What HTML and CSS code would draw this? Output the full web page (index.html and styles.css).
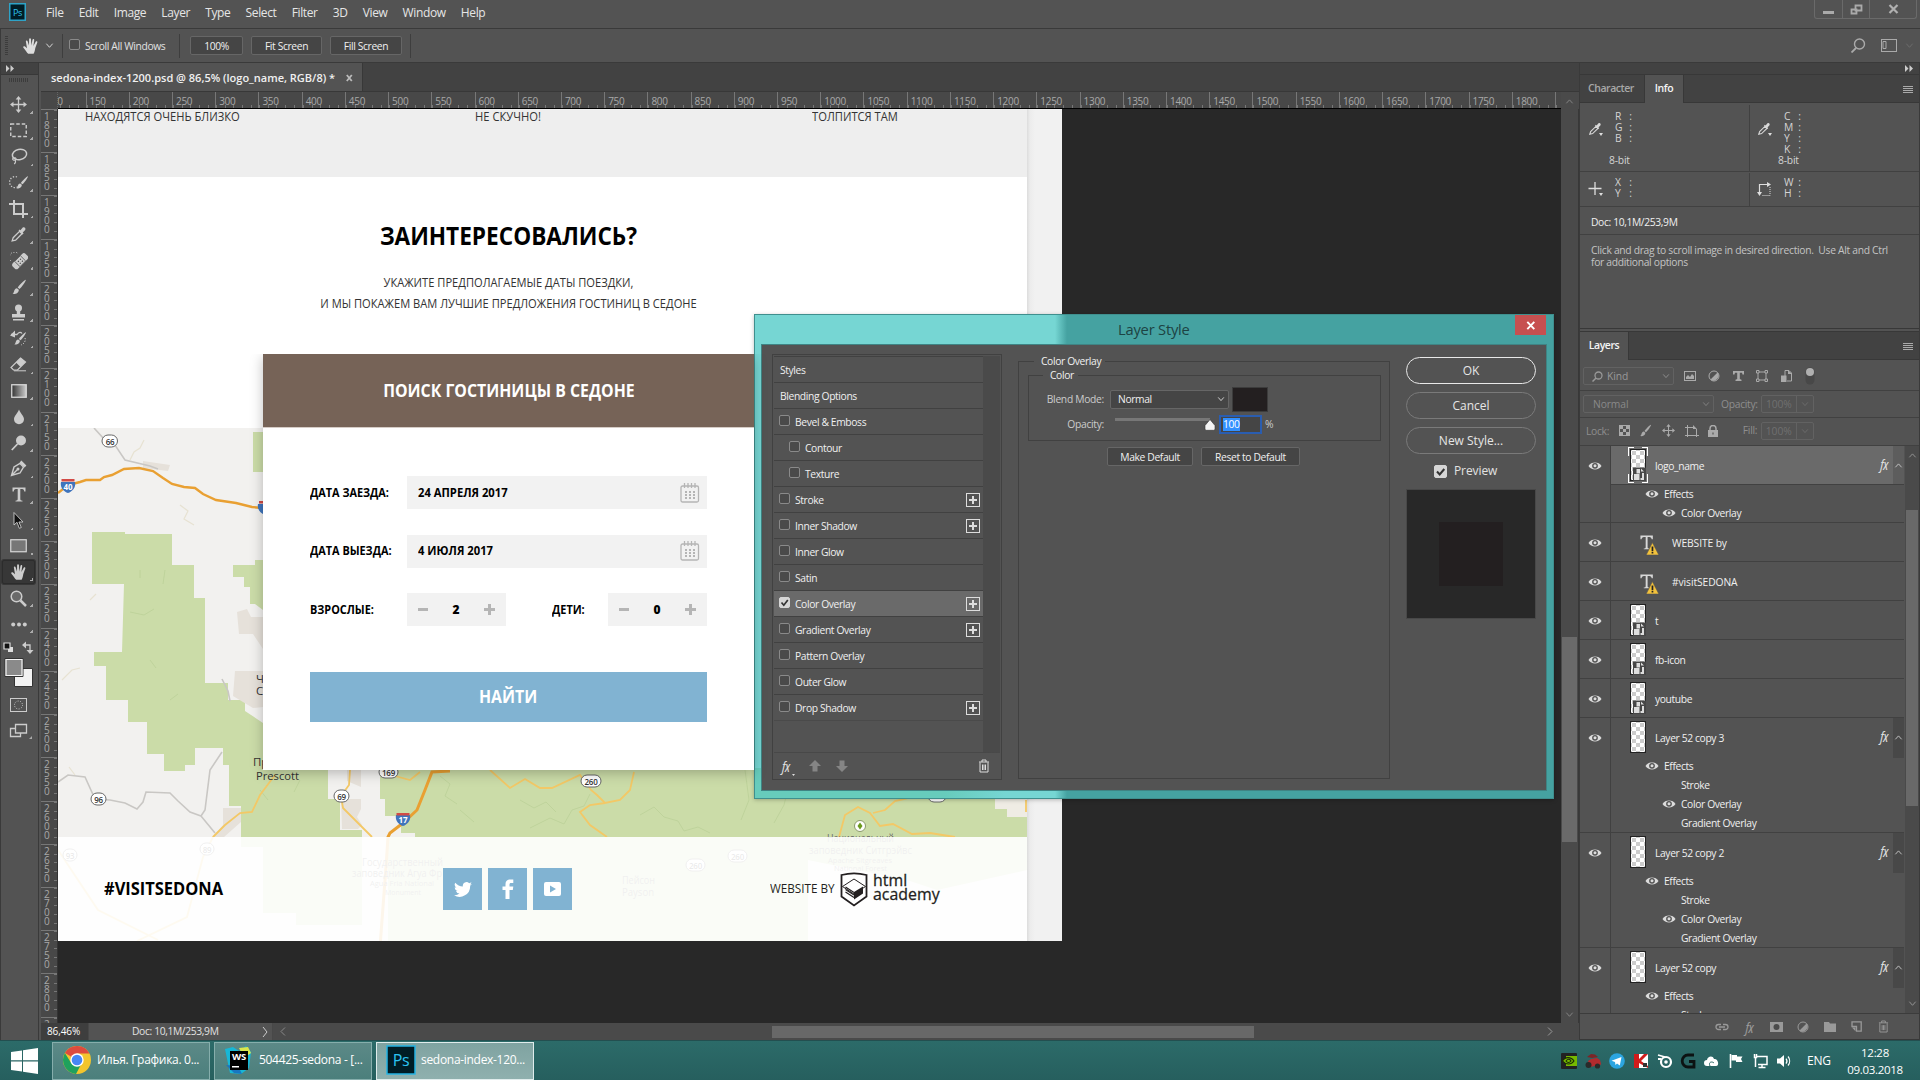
FILE: index.html
```html
<!DOCTYPE html>
<html lang="en">
<head>
<meta charset="utf-8">
<title>sedona-index-1200.psd</title>
<link rel="stylesheet" href="styles.css">
</head>
<body>
<svg class="defs" width="0" height="0">
  <defs>
    <symbol id="hand" viewBox="0 0 18 18"><path d="M6.2 16.8C5 15.600 3 12.400 1.400 10.700c-.7-.8.6-1.800 1.600-1.100l2 1.700L3.900 4.700c-.2-1.200 1.400-1.500 1.700-.4L7 8.600 7.100 2.200C7.100 1 8.900 1 9 2.200l.3 6.200 1.200-5.600c.3-1.100 1.900-.8 1.700.4l-.8 5.800 2.300-4.200c.6-1 2-.3 1.600.8l-2 5.400c-.4 2.400-.8 4.200-1.700 5.800z" fill="currentColor"/></symbol>
    <symbol id="chev" viewBox="0 0 10 10"><path d="M1.500 3l3.500 4 3.500-4" fill="none" stroke="currentColor"/></symbol>
    <symbol id="chevup" viewBox="0 0 10 10"><path d="M1.500 7L5 3.200 8.500 7" fill="none" stroke="currentColor"/></symbol>
    <symbol id="eye" viewBox="0 0 14 10"><path d="M0.500 5C3 .4 11 .4 13.500 5 11 9.600 3 9.600.5 5z" fill="#dcdcdc"/><circle cx="7" cy="4.800" r="2.900" fill="#535353"/><circle cx="7" cy="4.800" r="1.500" fill="#dcdcdc"/></symbol>
    <symbol id="dropper" viewBox="0 0 16 16"><path d="M2 14l1-3 6-6 2.300 2.300-6 6-3.300.7z" fill="none" stroke="currentColor" stroke-width="1.200"/><path d="M8 4.200l1-1 .8.8L12 1.500c1.500-1 3.200.7 2.300 2.200L12 6.200l.8.8-1 1z" fill="currentColor"/></symbol>
    <symbol id="brush" viewBox="0 0 16 16"><path d="M14.800.8c.7.500-4.600 8.400-6.300 9.200L6.700 8.600C7.700 6.700 14 .4 14.800.8zM6 9.200l1.800 1.500c.2 3.300-3.500 4.700-6.300 4.100C3.800 13.600 2.400 9.800 6 9.200z" fill="currentColor"/></symbol>
    <symbol id="move" viewBox="0 0 18 18"><path d="M9 2v14M2 9h14" stroke="currentColor" stroke-width="1.400"/><path d="M9 0l3 3.700H6zM9 18l3-3.700H6zM0 9l3.700-3v6zM18 9l-3.700-3v6z" fill="currentColor"/></symbol>
    <symbol id="trash" viewBox="0 0 12 14"><path d="M1 3h10M4 3V1h4v2M2 3.500V13h8V3.500M4.500 5.500V11M6 5.500V11M7.500 5.500V11" fill="none" stroke="currentColor"/></symbol>
    <symbol id="half" viewBox="0 0 12 12"><circle cx="6" cy="6" r="5" fill="none" stroke="currentColor"/><path d="M9.500 2.500A5 5 0 0 1 2.500 9.500z" fill="currentColor"/></symbol>
    <symbol id="typelayer" viewBox="0 0 22 22"><path d="M1.500 1h13v4h-1.200C13 3 12.300 2.500 9 2.500V13c0 1.500.5 1.500 2 1.700v.8H5v-.8c1.500-.2 2-.2 2-1.700V2.500C3.700 2.500 3 3 2.700 5H1.500z" fill="#d8d8d8"/><path d="M14 8.500L20.800 21.500H7.500z" fill="#f3c23c" stroke="#535353" stroke-width=".6"/><path d="M13.200 12.500h1.800v4.700h-1.800zM13.200 18.200h1.800v1.800h-1.800z" fill="#222"/></symbol>
    <symbol id="calendar" viewBox="0 0 20 20"><rect x="1" y="3" width="17.500" height="16" rx="1.500" fill="none" stroke="#b5b5b5" stroke-width="1.300"/><path d="M4.500 0v5M8 0v5M11.500 0v5M15 0v5" stroke="#b5b5b5" stroke-width="1.300"/><path d="M5 9h10M5 12h10M5 15h10" stroke="#b5b5b5" stroke-width="2" stroke-dasharray="2 2"/></symbol>
    <pattern id="checker" width="8" height="8" patternUnits="userSpaceOnUse"><path d="M0 0h8v8H0z" fill="#fff"/><path d="M0 0h4v4H0zM4 4h4v4H4z" fill="#ccc"/></pattern>
    <symbol id="thumb" viewBox="0 0 20 36"><rect x="2.500" y="2.500" width="15" height="31" fill="url(#checker)" stroke="#222"/></symbol>
    <symbol id="smart" viewBox="0 0 20 36"><rect x="2.500" y="2.500" width="15" height="31" fill="url(#checker)" stroke="#222"/><path d="M5 20.500h13V34H5z" fill="#474747"/><path d="M8.500 22h3.500v4.500H8.500zM13 21.500l3 3h-3z" fill="#ddd"/><path d="M15 26v6h-2.500" fill="none" stroke="#ddd" stroke-width="2"/><path d="M6 27h5.500v6H6z" fill="#ddd"/></symbol>
    <linearGradient id="grad"><stop offset="0" stop-color="#333"/><stop offset="1" stop-color="#ccc"/></linearGradient>
  </defs>
</svg>

<header class="menubar">
  <svg class="pslogo" width="17" height="18" viewBox="0 0 17 18"><rect x=".75" y=".75" width="15.500" height="16.500" fill="#001d26" stroke="#2fa3c7" stroke-width="1.500"/><text x="8.500" y="12.500" text-anchor="middle" font-size="9" fill="#31c5f0">Ps</text></svg>
  <nav class="menu"><span>File</span><span>Edit</span><span>Image</span><span>Layer</span><span>Type</span><span>Select</span><span>Filter</span><span>3D</span><span>View</span><span>Window</span><span>Help</span></nav>
  <div class="winbtns">
    <span><svg width="11" height="18"><path d="M0 11h11v3H0z" fill="#aaa"/></svg></span>
    <span><svg width="13" height="18"><path d="M5.500 5.500h6v5h-6zM1.500 9.500h5v4h-5z" fill="none" stroke="#aaa" stroke-width="1.800"/></svg></span>
    <span><svg width="11" height="18"><path d="M1.500 5l8 8M9.500 5l-8 8" stroke="#b0b0b0" stroke-width="2.200"/></svg></span>
  </div>
</header>

<section class="options">
  <i class="grip"></i>
  <svg class="opt-hand" width="18" height="18"><use href="#hand"/></svg>
  <svg class="opt-chev" width="9" height="9"><use href="#chev"/></svg>
  <i class="vsep"></i>
  <i class="cb"></i><span class="lbl">Scroll All Windows</span>
  <i class="vsep s2"></i>
  <span class="btn b1">100%</span><span class="btn b2">Fit Screen</span><span class="btn b3">Fill Screen</span>
  <i class="vsep s3"></i>
  <div class="opt-right">
    <svg width="15" height="15" viewBox="0 0 15 15"><circle cx="8.500" cy="6" r="5" fill="none" stroke="#aaa" stroke-width="1.400"/><path d="M5 10l-4.500 4.500" stroke="#aaa" stroke-width="1.800"/></svg>
    <svg width="16" height="13" viewBox="0 0 16 13"><rect x=".5" y=".5" width="15" height="12" fill="none" stroke="#aaa"/><path d="M2 2.500h3v7H2z" fill="none" stroke="#aaa"/></svg>
    <svg class="faded" width="9" height="9"><use href="#chev"/></svg>
  </div>
</section>

<main class="workspace">
  <aside class="tools">
    <div class="tools-head"><svg width="8" height="7"><path d="M0 0l3.500 3.500L0 7zM4.500 0L8 3.500 4.500 7z" fill="#ccc"/></svg></div>
    <i class="grip-h"></i>
    <ul>
      <li><svg width="17" height="17"><use href="#move"/></svg></li>
      <li><svg width="17" height="15"><rect x=".75" y="1" width="15.500" height="12.500" fill="none" stroke="#ccc" stroke-width="1.400" stroke-dasharray="3.500 2"/></svg></li>
      <li><svg width="18" height="17"><ellipse cx="9.500" cy="6.500" rx="7.200" ry="5.200" fill="none" stroke="#ccc" stroke-width="1.500" transform="rotate(-12 9.500 6.500)"/><path d="M4 9.500c-2.500 1-1 3.500 1 2.500s.5-3-1-2M5 12c1 1 .5 3-.8 4" fill="none" stroke="#ccc" stroke-width="1.200"/></svg></li>
      <li><svg width="20" height="16"><path d="M8 2a5.500 5.500 0 1 0 2 9" fill="none" stroke="#ccc" stroke-width="1.300" stroke-dasharray="1.300 1.600"/><use href="#brush" x="6" y="0" width="14" height="15"/></svg></li>
      <li><svg width="19" height="18"><path d="M0 4h14v14M5 0v14h14" fill="none" stroke="#ccc" stroke-width="2"/></svg></li>
      <li><svg width="17" height="17"><use href="#dropper"/></svg></li>
      <li><svg width="18" height="18"><g transform="rotate(-45 10 9)"><rect x="1" y="5.500" width="18" height="7.500" rx="2.500" fill="#ccc"/><rect x="6" y="5.500" width="8" height="7.500" fill="#ccc" stroke="#535353" stroke-width=".8"/><path d="M8 7.500h1.200v1.200H8zM11 7.500h1.200v1.200H11zM8 10.200h1.200v1.200H8zM11 10.200h1.200v1.200H11z" fill="#444"/></g><path d="M1 9A5 5 0 0 1 8 1.500" fill="none" stroke="#ccc" stroke-dasharray="1.200 1.500"/></svg></li>
      <li><svg width="16" height="16"><use href="#brush"/></svg></li>
      <li><svg width="15" height="17"><circle cx="7.500" cy="4" r="3.500" fill="#ccc"/><path d="M5.800 6h3.400v4H14v3.500H1V10h4.800zM2 15h11v1.500H2z" fill="#ccc"/></svg></li>
      <li><svg width="18" height="17"><use href="#brush" x="3" y="1" width="14" height="15"/><path d="M1 4.500h6C9 1.500 11 2 12 3.500" fill="none" stroke="#ccc" stroke-width="1.300"/><path d="M0 5.500l5-5v7z" fill="#ccc"/><path d="M15 8c1 3-1 6-4 7" fill="none" stroke="#ccc" stroke-dasharray="1.200 1.500"/></svg></li>
      <li><svg width="17" height="16"><path d="M10.500 1l5 4-8 8H3.500L1 10.500z" fill="none" stroke="#ccc" stroke-width="1.200"/><path d="M10.500 1l5 4-5 5-4.500-4.500z" fill="#ccc"/><path d="M4 13.800h12" stroke="#ccc"/></svg></li>
      <li><svg width="16" height="14"><rect x=".75" y=".75" width="14.500" height="12.500" fill="url(#grad)" stroke="#d8d8d8" stroke-width="1.300"/></svg></li>
      <li><svg width="12" height="16"><path d="M6 .5c1.500 4 5 6.500 5 9.800a5 5 0 0 1-10 0C1 7 4.500 4.500 6 .5z" fill="#ccc"/></svg></li>
      <li><svg width="16" height="16"><circle cx="10" cy="5.500" r="5" fill="#ccc"/><path d="M6.500 9L.8 15" stroke="#ccc" stroke-width="1.800"/></svg></li>
      <li><svg width="17" height="17"><path d="M1.500 15.500L4 7l6-3.500 3.500 3.500L10 13zM1.500 15.500L7.500 9.500" fill="none" stroke="#ccc" stroke-width="1.400"/><circle cx="8" cy="9" r="1.500" fill="#ccc"/><path d="M10.500 1.500l5 5" stroke="#ccc" stroke-width="2.500"/></svg></li>
      <li><svg width="14" height="15"><path d="M.5.500h13v4h-1.300C12 2.300 11.500 2 8.300 2v10c0 1.400.7 1.500 2.200 1.700v.8h-7v-.8c1.500-.2 2.200-.3 2.200-1.700V2C2.500 2 2 2.300 1.800 4.500H.5z" fill="#ccc"/></svg></li>
      <li><svg width="11" height="17"><path d="M1 .5v12.500l3-2.700 2.300 6 2-.8-2.400-5.500H10z" fill="#111" stroke="#ccc" stroke-width=".9"/></svg></li>
      <li><svg width="17" height="14"><rect x=".75" y=".75" width="15.500" height="12" fill="#777" stroke="#d8d8d8" stroke-width="1.200"/></svg></li>
      <li class="on"><svg width="18" height="18"><use href="#hand"/></svg></li>
      <li><svg width="17" height="17"><circle cx="6.500" cy="6.500" r="5.300" fill="#6a6a6a" stroke="#ccc" stroke-width="1.500"/><path d="M10.500 10.500l5.500 5.500" stroke="#ccc" stroke-width="2.500"/></svg></li>
      <li><svg width="16" height="5"><circle cx="2.200" cy="2.500" r="2" fill="#ccc"/><circle cx="8" cy="2.500" r="2" fill="#ccc"/><circle cx="13.800" cy="2.500" r="2" fill="#ccc"/></svg></li>
    </ul>
    <svg class="swatches" width="38" height="104" viewBox="0 637 38 104"><path d="M8 648h5v5H8z" fill="#ddd"/><path d="M4 644h6v6H4z" fill="#111" stroke="#ddd" stroke-width="1.200"/><path d="M24 646h6v6" fill="none" stroke="#ccc" stroke-width="1.300"/><path d="M26 642.500v7l-4-3.500zM26.500 651h7l-3.500 4z" fill="#ccc"/><path d="M14.500 669.500h18v18h-18z" fill="#f2f2f2" stroke="#333"/><path d="M5 659.500h18v18H5z" fill="#8a8a8a" stroke="#333"/><path d="M6 660.500h16v16H6z" fill="#8a8a8a" stroke="#f4f4f4" stroke-width="1.200"/><rect x="10.500" y="699.500" width="16" height="13" fill="none" stroke="#ccc"/><circle cx="18.500" cy="706" r="4" fill="none" stroke="#ccc" stroke-dasharray="1 1.500"/><path d="M10.500 729.500h10v8h-10z" fill="none" stroke="#ccc" stroke-width="1.300"/><path d="M15.500 725.500h11v8.500h-11z" fill="#535353" stroke="#ccc" stroke-width="1.300"/><path d="M29 740h3v-3z" fill="#aaa"/></svg>
  </aside>

  <section class="docwin">
    <div class="tabbar"><div class="tab"><b>sedona-index-1200.psd @ 86,5% (logo_name, RGB/8) *</b><svg width="7" height="8"><path d="M.8 1l5 6M5.800 1l-5 6" stroke="#bbb" stroke-width="1.800"/></svg></div></div>
    <div class="docgrid">
      <div class="corner"></div>
      <div class="hruler"><div class="ticks"><span>100</span><span>150</span><span>200</span><span>250</span><span>300</span><span>350</span><span>400</span><span>450</span><span>500</span><span>550</span><span>600</span><span>650</span><span>700</span><span>750</span><span>800</span><span>850</span><span>900</span><span>950</span><span>1000</span><span>1050</span><span>1100</span><span>1150</span><span>1200</span><span>1250</span><span>1300</span><span>1350</span><span>1400</span><span>1450</span><span>1500</span><span>1550</span><span>1600</span><span>1650</span><span>1700</span><span>1750</span><span>1800</span><span></span></div></div>
      <div class="scorner"><svg width="9" height="9"><use href="#chevup"/></svg></div>
      <div class="vruler"><span>1800</span><span>1850</span><span>1900</span><span>1950</span><span>2000</span><span>2050</span><span>2100</span><span>2150</span><span>2200</span><span>2250</span><span>2300</span><span>2350</span><span>2400</span><span>2450</span><span>2500</span><span>2550</span><span>2600</span><span>2650</span><span>2700</span><span>2750</span><span>2800</span><span>2</span></div>
      <div class="canvas">
        <div class="artboard">
          <div class="page">
            <div class="features"><span class="f1">НАХОДЯТСЯ ОЧЕНЬ БЛИЗКО</span><span class="f2">НЕ СКУЧНО!</span><span class="f3">ТОЛПИТСЯ ТАМ</span></div>
            <div class="intro">
              <h1>ЗАИНТЕРЕСОВАЛИСЬ?</h1>
              <p class="p1">УКАЖИТЕ ПРЕДПОЛАГАЕМЫЕ ДАТЫ ПОЕЗДКИ,</p>
              <p class="p2">И МЫ ПОКАЖЕМ ВАМ ЛУЧШИЕ ПРЕДЛОЖЕНИЯ ГОСТИНИЦ В СЕДОНЕ</p>
            </div>
            <svg class="map" width="969" height="513" viewBox="58 428 969 513">
              <rect x="58" y="428" width="969" height="513" fill="#f2f1ef"/>
              <g fill="#cbdca8">
                <path d="M92 532H125V534H172V565H194V598H205V683H228V700H245V711L263 723H328V799H340V830H362V925H296V913H263V847H241V806H229V765H223V748H195V765H185V771H164V754H147V722H128V700H106V666H94V652H122L124 584H92Z"/>
                <path d="M253 432h10v40h-10zM233 565h22v-5h8v50l-8-6h-5v-17h-6v-10h-11z"/>
                <path d="M380 760H1027V870L937 890 907 880 808 860V941H388V837H415V833H401V816H385V799H380Z"/>
              </g>
              <g fill="#e6e1da"><path d="M237 612l10-3 4 8h12v32l-10-15h-14zM235 671h28v36l-10 1-20-12zM223 808h18v14l-17 15h-11l10-12zM341 799h20v10l-4 8 5 8-4 4h-16zM347 770h14v17l-14-6zM143 461l27 4-2 6-25-3z"/></g>
              <g fill="none" stroke="#b9ce95" stroke-width="1" opacity=".7"><path d="M440 776l10 8-5 12 12 8M520 800l14 8 12-6 10 10M640 815l14-8 10 10 14 4 6 10 14-4 12 6M530 828l20-10 14 6 8-14 12-4 6-12M460 810l14 12M745 770l4 30-8 20M790 780l-6 25-10 18M130 612l14 3 10-6M140 570v8M165 570l-2 14M150 660l6 8M170 700l8-6M260 790l8 10M300 780l-6 12"/></g>
              <path d="M995 799h10v-6h10l12 2v22h-20v-8h-12z" fill="#efece4"/>
              <g fill="none" stroke="#c9c7c4" stroke-width="1.600"><path d="M94 428l11 12 10 5 10 15 25 6 8 3M58 782l10-7 17 2 10 22 15 1 15 3 12 6 6-7 3-10 24 1 8 8 12 11 11 4 4-6 5-40 12-18M201 816l14 17M222 679l6 12 2 10"/></g>
              <g fill="none" stroke="#e7e2d2" stroke-width="1.200"><path d="M130 460l4-8 6-4 4-8M62 680l10-10 8-2M75 775l-6-8M90 600l6-6M180 505l8 6-4 8 10 6"/></g>
              <g fill="none" stroke="#f3c866" stroke-width="1.800"><path d="M213 837l12-12 15-12 12-1 8-17 15-20M350 770l-1 15-8 11 2 12 12 12 17 17M395 776l15 4 10-8M490 770l20 18 15-9 15 9h12l28-13 11 15 6 5 8 8 15-3 10-10 4-18M605 803l-15 2-10 7 10 13 17 12M839 837l6-22 13-8 12 6 10 13 13-2 19 10 18-1 25 4M873 813l12-3 10-9 10-2 10-3M1026 800v12M58 850l40 60 60 30M213 837l-10 20-16 60-50 24"/></g>
              <g fill="none" stroke="#e9a032"><path d="M58 493l10-8 12-3 6-2h14l4-3 8-2 12-6 15-1 14 3 10 7 9 6 12 3 11 1 8 6 13 6 20 3 16 4 10 1" stroke-width="2.400"/><path d="M450 771l-18 1-7 18-8 20-14 13-13 10-2 4-2 30-6 80" stroke-width="3"/></g>
              <g class="pill"><rect x="102" y="435" width="15.500" height="12" rx="6"/><rect x="91" y="793" width="15" height="12" rx="6"/><rect x="334" y="790" width="15" height="12" rx="6"/><rect x="379" y="766" width="19" height="12" rx="6"/><rect x="581" y="775" width="20" height="12" rx="6"/><rect x="928" y="790" width="18" height="12" rx="6"/><rect x="63" y="849" width="14" height="12" rx="6"/><rect x="200" y="843" width="14" height="12" rx="6"/><rect x="728" y="850" width="19" height="12" rx="6"/><rect x="686" y="859" width="19" height="12" rx="6"/></g>
              <g class="pilltext"><text x="110" y="444.500">66</text><text x="98.500" y="802.500">96</text><text x="341.500" y="799.500">69</text><text x="388.500" y="775.500">169</text><text x="591" y="784.500">260</text><text x="70" y="858.500">93</text><text x="207" y="852.500">89</text><text x="737.500" y="859.500">260</text><text x="695.500" y="868.500">260</text></g>
              <g><path d="M61 482h14c1 5-2 9-7 11-5-2-8-6-7-11zM258 504h14c1 5-2 9-7 11-5-2-8-6-7-11zM396 815h14c1 5-2 9-7 11-5-2-8-6-7-11z" fill="#3f74bc"/><path d="M61.500 479h13v2.500h-13zM259 501h13v2.500h-13zM396.500 813h13v2.500h-13z" fill="#d24a45"/><g class="shieldtext"><text x="68" y="489.500">40</text><text x="403" y="823">17</text></g></g>
              <circle cx="860" cy="826" r="5.500" fill="#fff" stroke="#8a9a6a"/><path d="M860 822.500l2.500 3.500-2.500 3.500-2.500-3.500z" fill="#6b9a1f"/>
              <g class="places"><text x="253" y="766">Пр</text><text x="256" y="780" textLength="43" lengthAdjust="spacingAndGlyphs">Prescott</text><text x="256" y="683">Ч</text><text x="256" y="695">С</text></g>
              <g class="faint"><text x="362" y="866" textLength="81" lengthAdjust="spacingAndGlyphs">Государственный</text><text x="352" y="877" textLength="90" lengthAdjust="spacingAndGlyphs">заповедник Агуа Фр</text><g class="small"><text x="370" y="886" textLength="64" lengthAdjust="spacingAndGlyphs">Agua Fria National</text><text x="385" y="895" textLength="36" lengthAdjust="spacingAndGlyphs">Monument</text></g><text x="622" y="884" textLength="33" lengthAdjust="spacingAndGlyphs">Пейсон</text><text x="622" y="896" textLength="32" lengthAdjust="spacingAndGlyphs">Payson</text><text x="827" y="842" textLength="67" lengthAdjust="spacingAndGlyphs">Национальный</text><text x="809" y="854" textLength="103" lengthAdjust="spacingAndGlyphs">заповедник Ситгрэйвс</text><g class="small"><text x="828" y="863" textLength="64" lengthAdjust="spacingAndGlyphs">Apache Sitgreaves</text><text x="834" y="871" textLength="53" lengthAdjust="spacingAndGlyphs">National Forest</text></g></g>
            </svg>
            <div class="card">
              <div class="card-head"><span>ПОИСК ГОСТИНИЦЫ В СЕДОНЕ</span></div>
              <div class="form">
                <div class="frow"><label>ДАТА ЗАЕЗДА:</label><div class="field"><span>24 АПРЕЛЯ 2017</span><svg width="20" height="20"><use href="#calendar"/></svg></div></div>
                <div class="frow"><label>ДАТА ВЫЕЗДА:</label><div class="field"><span>4 ИЮЛЯ 2017</span><svg width="20" height="20"><use href="#calendar"/></svg></div></div>
                <div class="frow"><label>ВЗРОСЛЫЕ:</label><div class="counter"><i class="minus"></i><b>2</b><i class="plus"></i></div><label class="kids">ДЕТИ:</label><div class="counter"><i class="minus"></i><b>0</b><i class="plus"></i></div></div>
                <div class="submit"><span>НАЙТИ</span></div>
              </div>
            </div>
            <footer class="foot">
              <b class="hashtag">#VISITSEDONA</b>
              <div class="social">
                <span><svg width="18" height="15" viewBox="0 0 24 20"><path d="M24 2.400a10 10 0 0 1-2.800.8A5 5 0 0 0 23.300.4a10 10 0 0 1-3.100 1.200 5 5 0 0 0-8.400 4.500A14 14 0 0 1 1.700 1a5 5 0 0 0 1.500 6.600 5 5 0 0 1-2.200-.6 5 5 0 0 0 3.900 4.900 5 5 0 0 1-2.200.1 5 5 0 0 0 4.600 3.400A10 10 0 0 1 0 17.500 14 14 0 0 0 21.500 5 10 10 0 0 0 24 2.400z" fill="#fff"/></svg></span>
                <span><svg width="12" height="20" viewBox="0 0 12 20"><path d="M3.500 20V11H.5V7.500h3V5C3.500 2 5.200.5 8 .5h3.300V4H9C7.800 4 7.500 4.600 7.500 5.500v2h3.800L10.800 11H7.500v9z" fill="#fff"/></svg></span>
                <span><svg width="18" height="14"><rect width="17" height="14" rx="2" fill="#fff"/><path d="M6 3.500v7l6-3.500z" fill="#81b3d2"/></svg></span>
              </div>
              <div class="credit"><span class="wb">WEBSITE BY</span>
                <svg width="28" height="35" viewBox="0 0 28 35"><path d="M1.500 3C9 1 19 1 26.500 3v21.500L14 33.500 1.500 24.500z" fill="none" stroke="#231f20" stroke-width="1.800"/><path d="M14 7l11.500 7.500-11.500 7.500L2.500 14.500z" fill="none" stroke="#231f20"/><path d="M14 20l9-5.500v7L14 27.500z" fill="#231f20"/><path d="M5.500 17.500l8.500 5.500M5.500 20l8.500 5.500M5.500 15l8.500 5.500" fill="none" stroke="#231f20" stroke-width="1.200"/></svg>
                <div class="brand"><span>html</span><span>academy</span></div></div>
            </footer>
          </div>
          <div class="margin"></div>
        </div>
      </div>
      <div class="vscroll"><i></i><svg width="9" height="9"><use href="#chev"/></svg></div>
      <div class="status"><span class="zoom">86,46%</span><span class="docsize">Doc: 10,1M/253,9M</span><svg width="7" height="12"><path d="M1 1l4 5-4 5" fill="none" stroke="#ccc"/></svg><div class="hscroll"><svg width="6" height="9"><path d="M5 0.500L1 4.500l4 4" fill="none" stroke="#888"/></svg><i></i><svg width="6" height="9"><path d="M1 .5l4 4-4 4" fill="none" stroke="#999"/></svg></div></div>
    </div>
  </section>

  <aside class="panels">
    <div class="phead"><svg width="8" height="7"><path d="M0 0l3.500 3.500L0 7zM4.500 0L8 3.500 4.500 7z" fill="#ccc"/></svg></div>
    <div class="ptabs"><span class="ptab t-char">Character</span><span class="ptab t-info active">Info</span><i class="burger"></i></div>
    <div class="info">
      <div class="irow r1">
        <div class="icell"><svg class="drop" width="14" height="14"><use href="#dropper"/></svg><i class="mini"></i><div class="icol"><p>R<em>:</em></p><p>G<em>:</em></p><p>B<em>:</em></p><p>&nbsp;</p><p class="bit">8-bit</p></div></div>
        <div class="icell"><svg class="drop" width="14" height="14"><use href="#dropper"/></svg><i class="mini"></i><div class="icol"><p>C<em>:</em></p><p>M<em>:</em></p><p>Y<em>:</em></p><p>K<em>:</em></p><p class="bit">8-bit</p></div></div>
      </div>
      <div class="irow r2">
        <div class="icell"><svg class="drop" width="14" height="14"><path d="M7 0v13M.5 6.500h13" stroke="#ddd" stroke-width="1.300"/></svg><i class="mini"></i><div class="icol"><p>X<em>:</em></p><p>Y<em>:</em></p></div></div>
        <div class="icell"><svg class="drop" width="14" height="14"><path d="M2.500 11V2.500H11" fill="none" stroke="#ddd" stroke-width="1.200"/><path d="M10 0l4 2.500L10 5zM0 10h5l-2.500 4z" fill="#ddd"/><path d="M13 5v8.500H5" fill="none" stroke="#ddd" stroke-dasharray="1 1"/></svg><i class="mini none"></i><div class="icol"><p>W<em>:</em></p><p>H<em>:</em></p></div></div>
      </div>
      <div class="idoc">Doc: 10,1M/253,9M</div>
      <div class="itip">Click and drag to scroll image in desired direction.&nbsp; Use Alt and Ctrl<br>for additional options</div>
    </div>
    <div class="ptabs layers-tabs"><span class="ptab t-layers active">Layers</span><i class="burger"></i></div>
    <div class="lfilter">
      <div class="dim kind"><svg width="11" height="11"><circle cx="6.500" cy="4.500" r="3.500" fill="none" stroke="#999" stroke-width="1.300"/><path d="M4 7L.5 10.500" stroke="#999" stroke-width="1.500"/></svg><span>Kind</span><svg class="end" width="8" height="8"><use href="#chev"/></svg></div>
      <svg class="fi" width="12" height="10"><rect x=".5" y=".5" width="11" height="9" fill="none" stroke="#aaa"/><path d="M2 8V6l2-2 2 2 2-3 2 2v3z" fill="#aaa"/></svg>
      <svg class="fi" width="12" height="12"><use href="#half"/></svg>
      <svg class="fi" width="11" height="10"><path d="M0 0h11v3.500H9.500L9 1.800H6.800V8l1.700.7V10h-6V8.700L4.200 8V1.800H2l-.5 1.700H0z" fill="#aaa"/></svg>
      <svg class="fi" width="12" height="12"><path d="M2 2h8v8H2z" fill="none" stroke="#aaa"/><path d="M.5.500h2.500v2.500H.5zM9 .5h2.500v2.500H9zM.5 9h2.500v2.500H.5zM9 9h2.500v2.500H9z" fill="#535353" stroke="#aaa"/></svg>
      <svg class="fi" width="11" height="12"><path d="M4 6V.5h4L10.500 3v8H6" fill="none" stroke="#aaa"/><path d="M0 5.500h5.500V12H0zM7 0v4h4z" fill="#aaa"/></svg>
      <svg class="toggle" width="10" height="18"><rect x=".5" y=".5" width="9" height="17" rx="4.500" fill="#484848"/><circle cx="5" cy="5" r="4" fill="#b0b0b0"/></svg>
    </div>
    <div class="lblend"><div class="dim mode"><span>Normal</span><svg class="end" width="8" height="8"><use href="#chev"/></svg></div><span class="dl op">Opacity:</span><div class="dim num"><span>100%</span><i><svg width="8" height="8"><use href="#chev"/></svg></i></div></div>
    <div class="llock"><span class="dl lk">Lock:</span>
      <svg width="11" height="11"><rect x=".5" y=".5" width="10" height="10" fill="none" stroke="#aaa"/><path d="M1 1h3v3H1zM7 1h3v3H7zM4 4h3v3H4zM1 7h3v3H1zM7 7h3v3H7z" fill="#aaa"/></svg>
      <svg width="13" height="13"><use href="#brush"/></svg>
      <svg width="13" height="13"><use href="#move"/></svg>
      <svg width="14" height="12"><path d="M0 2.500h8M0 10.500h14M2.500 0v12M11.500 4v8" stroke="#aaa"/><path d="M8 0l4 4H8z" fill="#aaa"/></svg>
      <svg width="10" height="12"><path d="M0 5h10v7H0z" fill="#aaa"/><path d="M2 5V3.500a3 3 0 0 1 6 0V5" fill="none" stroke="#aaa" stroke-width="1.500"/><path d="M4.500 7.500h1v2h-1z" fill="#444"/></svg>
      <span class="dl fl">Fill:</span><div class="dim num"><span>100%</span><i><svg width="8" height="8"><use href="#chev"/></svg></i></div></div>
    <div class="lwrap">
      <div class="llist">
        <div class="layer"><div class="eyecol"><svg width="14" height="10"><use href="#eye"/></svg></div><div class="lbody"><div class="lrow sel"><svg class="thumb" width="20" height="36"><use href="#smart"/><path d="M.5 9V.5H6M14 .5h5.500V9M.5 27v8.500H6M14 35.500h5.500V27" fill="none" stroke="#fff" stroke-width="1.200"/></svg><span class="nm">logo_name</span><em class="fx">fx</em><i class="fold"><svg width="9" height="9"><use href="#chevup"/></svg></i></div><div class="ef e1"><svg width="14" height="10"><use href="#eye"/></svg>Effects</div><div class="ef e2"><svg width="14" height="10"><use href="#eye"/></svg>Color Overlay</div></div></div>
        <div class="layer"><div class="eyecol"><svg width="14" height="10"><use href="#eye"/></svg></div><div class="lbody"><div class="lrow"><svg class="tt" width="21" height="22"><use href="#typelayer"/></svg><span class="nm tn">WEBSITE by</span></div></div></div>
        <div class="layer"><div class="eyecol"><svg width="14" height="10"><use href="#eye"/></svg></div><div class="lbody"><div class="lrow"><svg class="tt" width="21" height="22"><use href="#typelayer"/></svg><span class="nm tn">#visitSEDONA</span></div></div></div>
        <div class="layer"><div class="eyecol"><svg width="14" height="10"><use href="#eye"/></svg></div><div class="lbody"><div class="lrow"><svg class="thumb" width="20" height="36"><use href="#smart"/></svg><span class="nm">t</span></div></div></div>
        <div class="layer"><div class="eyecol"><svg width="14" height="10"><use href="#eye"/></svg></div><div class="lbody"><div class="lrow"><svg class="thumb" width="20" height="36"><use href="#smart"/></svg><span class="nm">fb-icon</span></div></div></div>
        <div class="layer"><div class="eyecol"><svg width="14" height="10"><use href="#eye"/></svg></div><div class="lbody"><div class="lrow"><svg class="thumb" width="20" height="36"><use href="#smart"/></svg><span class="nm">youtube</span></div></div></div>
        <div class="layer"><div class="eyecol"><svg width="14" height="10"><use href="#eye"/></svg></div><div class="lbody"><div class="lrow"><svg class="thumb" width="20" height="36"><use href="#thumb"/></svg><span class="nm">Layer 52 copy 3</span><em class="fx">fx</em><i class="fold"><svg width="9" height="9"><use href="#chevup"/></svg></i></div><div class="ef e1"><svg width="14" height="10"><use href="#eye"/></svg>Effects</div><div class="ef e3">Stroke</div><div class="ef e2"><svg width="14" height="10"><use href="#eye"/></svg>Color Overlay</div><div class="ef e3">Gradient Overlay</div></div></div>
        <div class="layer"><div class="eyecol"><svg width="14" height="10"><use href="#eye"/></svg></div><div class="lbody"><div class="lrow"><svg class="thumb" width="20" height="36"><use href="#thumb"/></svg><span class="nm">Layer 52 copy 2</span><em class="fx">fx</em><i class="fold"><svg width="9" height="9"><use href="#chevup"/></svg></i></div><div class="ef e1"><svg width="14" height="10"><use href="#eye"/></svg>Effects</div><div class="ef e3">Stroke</div><div class="ef e2"><svg width="14" height="10"><use href="#eye"/></svg>Color Overlay</div><div class="ef e3">Gradient Overlay</div></div></div>
        <div class="layer"><div class="eyecol"><svg width="14" height="10"><use href="#eye"/></svg></div><div class="lbody"><div class="lrow"><svg class="thumb" width="20" height="36"><use href="#thumb"/></svg><span class="nm">Layer 52 copy</span><em class="fx">fx</em><i class="fold"><svg width="9" height="9"><use href="#chevup"/></svg></i></div><div class="ef e1"><svg width="14" height="10"><use href="#eye"/></svg>Effects</div><div class="ef e3">Stroke</div></div></div>
      </div>
      <div class="lscroll"><svg width="9" height="9"><use href="#chevup"/></svg><i></i><svg width="9" height="9"><use href="#chev"/></svg></div>
    </div>
    <div class="lfoot">
      <svg width="14" height="8"><path d="M6 1.500H3.500a2.500 2.500 0 0 0 0 5H6M8 1.500h2.500a2.500 2.500 0 0 1 0 5H8M4 4h6" fill="none" stroke="#999" stroke-width="1.300"/></svg>
      <em class="fx">fx</em>
      <svg width="13" height="10"><path d="M0 0h13v10H0z" fill="#999"/><circle cx="6.500" cy="5" r="3" fill="#4a4a4a"/></svg>
      <svg width="12" height="12"><use href="#half"/></svg>
      <svg width="12" height="10"><path d="M0 0h5l1 1.500h6V10H0z" fill="#999"/></svg>
      <svg width="11" height="11"><path d="M1 .8h9.200v9.400H5.500V5.500H1z" fill="none" stroke="#999" stroke-width="1.300"/><path d="M1 6.500l3.500 3.700V6.500z" fill="#999"/></svg>
      <svg width="11" height="13"><use href="#trash"/></svg>
    </div>
  </aside>
</main>

<footer class="taskbar">
  <svg class="start" width="27" height="26" viewBox="0 0 27 26"><path d="M0 4l11-1.600V12.300H0zM12 2.200L27 0v12.300H12zM0 13.500h11v10L0 22zM12 13.500h15V26l-15-2.200z" fill="#fff"/></svg>
  <div class="task"><svg width="30" height="30" viewBox="0 0 30 30"><circle cx="15" cy="15" r="14" fill="#f3c52d"/><path d="M15 15L2.900 8A14 14 0 0 1 27.500 8.500H15z" fill="#dd4b3e"/><path d="M2.900 8A14 14 0 0 0 14 29l5.500-10.500L15 15 8.500 17z" fill="#1fa15d"/><circle cx="15" cy="15" r="6.700" fill="#fff"/><circle cx="15" cy="15" r="5.300" fill="#4687f4"/></svg><span>Илья. Графика. 0...</span></div>
  <div class="task"><svg width="30" height="30" viewBox="0 0 30 30"><path d="M1 4l8-2 6 4 7-5 5 6-2 16-8 6-11-1z" fill="#17b7d6"/><path d="M15 3l9-1 3 6-7 5z" fill="#dbe64c"/><path d="M2 20l8 8 8 1-4-8z" fill="#1876c0"/><path d="M6 6h18v19H6z" fill="#000"/><path d="M8 21h7v1.500H8z" fill="#fff"/><text x="15" y="15" text-anchor="middle" font-size="9.500" font-weight="700" fill="#fff">WS</text></svg><span>504425-sedona - [...</span></div>
  <div class="task active"><svg width="30" height="30" viewBox="0 0 30 30"><rect x="1" y="1" width="28" height="28" fill="#001d26" stroke="#25b4e4" stroke-width="1.500"/><text x="15" y="21" text-anchor="middle" font-size="16" fill="#2cc4f4">Ps</text></svg><span>sedona-index-120...</span></div>
  <div class="tray">
    <svg width="16" height="16"><rect width="16" height="16" rx="1" fill="#222"/><path d="M5 3h11v10H5z" fill="#76b900"/><path d="M1.500 8C4 3.500 10 3.500 13 8c-3 4-8 4-11.500 0zM5 8c2-2.500 4-2 5 0-1.500 2-3.500 2-5 0z" fill="#76b900" stroke="#1c2b06" stroke-width="1.100"/></svg>
    <svg width="16" height="16"><path d="M3 8l3-2 6-1 3 2 1 4-2 3-4-1-5 1z" fill="#b32a2e"/><circle cx="3.500" cy="12" r="3" fill="#2a2a2a"/><circle cx="12.500" cy="13" r="2.600" fill="#2a2a2a"/><path d="M2 4l4-3 4 .5 3 2.500-6 1z" fill="#7d2426"/></svg>
    <svg width="16" height="16"><circle cx="8" cy="8" r="7.800" fill="#2ca5e0"/><path d="M2.500 7.800L12.500 4l-1.700 8.500L8 10.500l-1.500 1.500-.5-3z" fill="#fff"/></svg>
    <svg width="16" height="16"><path d="M1 1h14v14H1z" fill="#fff"/><path d="M1 1h5v5l5-5h4L8 8l7 5v2L6 10v5H1z" fill="#cf1b1b"/><path d="M10 10h4v4h-4z" fill="#333"/></svg>
    <svg width="16" height="16"><circle cx="9" cy="9" r="5" fill="none" stroke="#fff" stroke-width="2.200"/><circle cx="9" cy="9" r="1.800" fill="#fff"/><path d="M1 2l7 2M1 6h3" stroke="#fff" stroke-width="1.800"/></svg>
    <svg width="16" height="16"><path d="M14 2H8A5.500 5.700 0 0 0 8 14h6V8.500H9" fill="none" stroke="#0c1212" stroke-width="2.800"/></svg>
    <svg width="16" height="16"><path d="M3 13a3 3 0 0 1 0-6c.5-4 6-5 7-1 4-1 6 7 2 7z" fill="#fff"/><path d="M6 13c-2-4 2-5 4-3" fill="none" stroke="#2a6765"/></svg>
    <svg width="16" height="16"><path d="M2.500 1v14" stroke="#fff" stroke-width="1.600"/><path d="M3.500 2h5.500v1.500h5.500L13 6l1.500 3H8V7.500H3.500z" fill="#fff"/></svg>
    <svg width="16" height="16"><path d="M5 3.500h10v8H6M10 12v2.500M6.500 14.500h7M2.500 1v3.500h2V1M3.500 5v9" fill="none" stroke="#fff" stroke-width="1.500"/></svg>
    <svg width="16" height="16"><path d="M1 5.500h3L8 2v12L4 10.500H1z" fill="#fff"/><path d="M10 5.500a4 4 0 0 1 0 5M12 3.500a7 7 0 0 1 0 9" fill="none" stroke="#fff" stroke-width="1.200"/></svg>
  </div>
  <span class="lang">ENG</span>
  <div class="clock"><span>12:28</span><span>09.03.2018</span></div>
</footer>

<div class="dialog">
  <div class="dtitle"><span>Layer Style</span><i class="close"><svg width="10" height="9"><path d="M1.300.8l7 7.400M8.300.8l-7 7.400" stroke="#fff" stroke-width="1.900"/></svg></i></div>
  <div class="dbody">
    <div class="dlist">
      <div class="drows">
        <div class="drow"><span>Styles</span></div>
        <div class="drow"><span>Blending Options</span></div>
        <div class="drow"><i class="cb"></i><span>Bevel &amp; Emboss</span></div>
        <div class="drow sub"><i class="cb"></i><span>Contour</span></div>
        <div class="drow sub"><i class="cb"></i><span>Texture</span></div>
        <div class="drow"><i class="cb"></i><span>Stroke</span><i class="add"></i></div>
        <div class="drow"><i class="cb"></i><span>Inner Shadow</span><i class="add"></i></div>
        <div class="drow"><i class="cb"></i><span>Inner Glow</span></div>
        <div class="drow"><i class="cb"></i><span>Satin</span></div>
        <div class="drow sel"><i class="cb on"><svg width="11" height="11"><path d="M2.500 5.500l2.300 2.700L8.800 3" fill="none" stroke="#333" stroke-width="1.700"/></svg></i><span>Color Overlay</span><i class="add"></i></div>
        <div class="drow"><i class="cb"></i><span>Gradient Overlay</span><i class="add"></i></div>
        <div class="drow"><i class="cb"></i><span>Pattern Overlay</span></div>
        <div class="drow"><i class="cb"></i><span>Outer Glow</span></div>
        <div class="drow"><i class="cb"></i><span>Drop Shadow</span><i class="add"></i></div>
      </div>
      <div class="dlfoot"><em class="fx">fx</em><svg class="dn" width="3" height="3"><path d="M0 0h3L1.500 2z" fill="#ddd"/></svg><svg class="a1" width="12" height="12"><path d="M6 0l6 6H8.500v5.500h-5V6H0z" fill="#858585"/></svg><svg class="a2" width="12" height="12"><path d="M6 12l6-6H8.500V.5h-5V6H0z" fill="#858585"/></svg><svg class="tr" width="12" height="14"><use href="#trash"/></svg></div>
    </div>
    <fieldset class="outer"><legend>Color Overlay</legend>
      <fieldset class="inner"><legend>Color</legend>
        <div class="crow"><span class="cl">Blend Mode:</span><div class="select"><span>Normal</span><svg width="8" height="8"><use href="#chev"/></svg></div><i class="swatch"></i></div>
        <div class="crow c2"><span class="cl">Opacity:</span><div class="slider"><svg width="12" height="12"><path d="M6 .5l5 6V10a1.300 1.300 0 0 1-1.300 1.300H2.300A1.300 1.300 0 0 1 1 10V6.500z" fill="#f4f4f4" stroke="#333" stroke-width=".6"/></svg></div><div class="input"><mark>100</mark></div><span class="pct">%</span></div>
      </fieldset>
      <div class="defaults"><span class="btn d1">Make Default</span><span class="btn d2">Reset to Default</span></div>
    </fieldset>
    <div class="dside">
      <span class="pbtn ok">OK</span><span class="pbtn">Cancel</span><span class="pbtn">New Style...</span>
      <div class="prev"><i class="cb on big"><svg width="13" height="13"><path d="M3 6.500l2.700 3L10.300 4" fill="none" stroke="#333" stroke-width="2"/></svg></i><span>Preview</span></div>
      <div class="pbox"><i></i></div>
    </div>
  </div>
</div>
</body>
</html>
```

FILE: styles.css
```css
* { box-sizing: border-box; }
html, body { margin: 0; padding: 0; }
body { width: 1920px; height: 1080px; overflow: hidden; display: flex; flex-direction: column; background: #535353; color: #e2e2e2; font: 10.3px/12px "Open Sans", "Noto Sans", sans-serif; letter-spacing: -.37px; white-space: nowrap; }
svg { display: block; flex: none; }
i { font-style: normal; display: block; flex: none; }
ul, p, h1 { margin: 0; padding: 0; list-style: none; }
.defs { position: absolute; }
.fx { font: italic 15px/16px "Open Sans", sans-serif; font-stretch: 75%; letter-spacing: -.3px; color: #ddd; }

/* menu bar */
.menubar { height: 29px; flex: none; display: flex; align-items: flex-start; border-bottom: 1px solid #3a3a3a; }
.pslogo { margin: 3px 0 0 9px; }
.menu { display: flex; gap: 15.1px; margin-left: 20px; font-size: 12px; line-height: 26px; letter-spacing: -.36px; color: #e6e6e6; }
.winbtns { margin-left: auto; margin-right: 3px; height: 19px; display: flex; border: 1px solid #6a6a6a; border-top: 0; border-radius: 0 0 3px 3px; }
.winbtns span { width: 27px; display: flex; justify-content: center; border-left: 1px solid #6a6a6a; }
.winbtns span:first-child { border-left: 0; }
.winbtns span:last-child { width: 47px; }

/* options bar */
.options { height: 34px; flex: none; display: flex; align-items: center; border-bottom: 1px solid #3a3a3a; border-left: 1px solid #3a3a3a; padding-left: 4px; }
.grip { width: 3px; height: 20px; background: repeating-linear-gradient(#3c3c3c 0 1px, transparent 1px 2px); }
.opt-hand { margin-left: 14px; color: #ddd; }
.opt-chev { margin-left: 5px; }
.vsep { width: 1px; height: 24px; background: #3e3e3e; margin-left: 8px; }
.cb { width: 11px; height: 11px; border: 1px solid #8a8a8a; border-radius: 2px; background: #4a4a4a; }
.cb.on { border-color: #d6d6d6; background: #d6d6d6; }
.cb.on svg { margin: -1px; }
.options .cb { margin-left: 6px; margin-top: -2px; }
.options .lbl { margin-left: 5px; width: 94px; }
.options .s2 { margin-left: 0; }
.btn { height: 19px; display: flex; align-items: center; justify-content: center; border: 1px solid #666; border-radius: 2px; background: #454545; color: #f0f0f0; }
.b1 { width: 53px; margin-left: 10px; }
.b2 { width: 71px; margin-left: 8px; }
.b3 { width: 72px; margin-left: 8px; }
.opt-right { margin-left: auto; display: flex; align-items: center; gap: 14.5px; padding-right: 6px; }
.opt-right .faded { margin-left: -6px; color: #6e6e6e; }

.workspace { height: 977px; flex: none; display: flex; }

/* tools */
.tools { width: 39px; flex: none; border-left: 1px solid #3a3a3a; border-right: 1px solid #3a3a3a; display: flex; flex-direction: column; }
.tools-head { height: 12px; background: #424242; border-bottom: 1px solid #383838; padding: 2px 0 0 5px; }
.grip-h { width: 20px; height: 4px; margin: 3px 0 0 8px; background: repeating-linear-gradient(90deg, #3c3c3c 0 1px, transparent 1px 2px); }
.tools ul { margin-top: 10px; }
.tools li { height: 25.980px; width: 35px; display: flex; align-items: center; justify-content: center; color: #ccc; background: linear-gradient(135deg, transparent 50%, #aaa 50%) 29px 19px / 3px 3px no-repeat; }
.tools li.on { background-color: #373737; outline: 1px solid #2c2c2c; outline-offset: -2px; border-radius: 3px; }
.swatches { margin-left: -1px; margin-top: -1px; }

/* document window */
.docwin { width: 1538px; margin-left: 2px; flex: none; display: flex; flex-direction: column; }
.tabbar { height: 29px; flex: none; background: #424242; border-bottom: 1px solid #383838; display: flex; }
.tab { width: 322px; background: #535353; display: flex; align-items: center; padding: 1px 0 0 10px; gap: 10px; border-right: 1px solid #383838; height: 28px; }
.tab b { font-size: 11px; font-weight: 600; letter-spacing: 0; color: #f0f0f0; width: 285px; }
.docgrid { flex: 1; display: grid; grid-template: 17px 914px 17px / 17px 1503px 18px; }
.corner { background: #484848; border-right: 1px dotted #666; }
.hruler { overflow: hidden; background: #484848; border-bottom: 1px solid #000; }
.ticks { display: flex; margin-left: -15.700px; }
.ticks span { width: 43.230px; flex: none; height: 16px; border-left: 1px solid #777; padding-left: 3px; color: #a9a9a9; line-height: 19px; font-size: 10px; letter-spacing: -.3px; background: repeating-linear-gradient(90deg, #777 0 1px, transparent 1px 8.646px) 0 13px / 100% 3px no-repeat; }
.scorner { background: #4a4a4a; color: #888; padding: 5px 0 0 4px; }
.vruler { overflow: hidden; background: #484848; display: flex; flex-direction: column; border-right: 1px solid #333; }
.vruler span { height: 43.230px; flex: none; border-top: 1px solid #777; padding: 2px 8px 0 3px; width: 17px; color: #a9a9a9; font-size: 10px; letter-spacing: 0; line-height: 9px; word-break: break-all; white-space: normal; background: repeating-linear-gradient(#777 0 1px, transparent 1px 8.646px) 13px 0 / 3px 100% no-repeat; }
.canvas { background: #282828; overflow: hidden; }

/* site mock-up on the artboard */
.artboard { display: flex; width: 1004px; height: 832px; }
.page { width: 969px; display: grid; grid-template: 68px 177px 74px 342px 67px 104px / 205px 491px 273px; background: #fff; color: #000; letter-spacing: 0; }
.margin { width: 35px; background: linear-gradient(90deg, #dcdcdc, #ececec 3px, #f1f1f1 8px); }
.features { grid-area: 1 / 1 / 2 / 4; background: #eee; color: #333; font-size: 12px; line-height: 15px; display: flex; }
.features span { flex: none; transform: scaleX(.933); transform-origin: 0 0; }
.f1 { margin-left: 27px; width: 390px; }
.f2 { width: 337px; }
.intro { grid-area: 2 / 1 / 3 / 4; width: 901px; text-align: center; }
.intro h1 { font-size: 25px; line-height: 30px; margin-top: 43px; transform: scaleX(.905); }
.intro p { font-size: 12px; line-height: 21px; color: #333; transform: scaleX(.928); }
.intro .p1 { margin-top: 22px; }
.map { grid-area: 4 / 1 / 7 / 4; }
.card { grid-area: 3 / 2 / 5 / 3; z-index: 1; background: #fff; box-shadow: 0 3px 12px rgba(0,0,0,.25); clip-path: inset(0 -20px -20px -20px); }
.card-head { height: 74px; background: #766357; color: #fff; font-size: 18px; font-weight: 700; display: flex; align-items: center; justify-content: center; padding-bottom: 1px; border-bottom: 1px solid #d6ccc6; }
.card-head span { transform: scaleX(.88); }
.form { padding: 48px 47px 0 47px; }
.frow { display: flex; align-items: center; height: 33px; margin-bottom: 25.500px; font-size: 12px; font-weight: 700; }
.frow label { width: 97px; flex: none; transform: scaleX(.905); transform-origin: 0 0; }
.field { width: 300px; height: 33px; background: #f2f2f2; display: flex; align-items: center; justify-content: space-between; padding: 0 7px 0 11px; }
.field span { transform: scaleX(.935); transform-origin: 0 0; }
.counter { width: 99px; height: 33px; background: #f2f2f2; display: flex; align-items: center; justify-content: space-between; padding: 0 11px; }
.frow .kids { margin-left: 46px; width: 56px; }
.minus { width: 10px; height: 3px; background: #b5b5b5; }
.plus { width: 11px; height: 11px; background: linear-gradient(#b5b5b5, #b5b5b5) center / 3px 100% no-repeat, linear-gradient(#b5b5b5, #b5b5b5) center / 100% 3px no-repeat; }
.submit { margin-top: 46px; height: 50px; background: #81b3d2; color: #fff; font-size: 18px; font-weight: 700; display: flex; align-items: center; justify-content: center; padding-bottom: 2px; }
.submit span { transform: scaleX(.88); }
.foot { grid-area: 6 / 1 / 7 / 4; z-index: 1; background: rgba(255,255,255,.9); display: flex; align-items: center; }
.hashtag { font-size: 17.500px; margin-left: 46px; width: 339px; padding-bottom: 3px; transform: scaleX(.94); transform-origin: 0 0; }
.social { display: flex; gap: 6px; }
.social span { width: 39px; height: 42px; background: #81b3d2; display: flex; align-items: center; justify-content: center; }
.credit { display: flex; align-items: center; margin-left: 198px; color: #231f20; }
.wb { font-size: 13px; width: 70px; padding-bottom: 2px; transform: scaleX(.9); transform-origin: 0 0; }
.brand { display: flex; flex-direction: column; margin-left: 5px; font-size: 17px; line-height: 14px; padding-bottom: 4px; transform: scaleX(.935); transform-origin: 0 0; -webkit-text-stroke: .3px #231f20; }
.pill rect { fill: #fff; stroke: #666; stroke-width: 1; }
.pilltext text { font-size: 8px; font-weight: 600; text-anchor: middle; fill: #333; letter-spacing: -.3px; }
.shieldtext text { font-size: 8px; font-weight: 700; text-anchor: middle; fill: #fff; }
.places text { font-size: 11.500px; fill: #333; }
.faint text { font-size: 10px; fill: #666; }
.faint .small text { font-size: 8px; }

.vscroll { background: #4a4a4a; border-right: 1px solid #383838; display: flex; flex-direction: column; justify-content: space-between; padding: 528px 0 4px 1px; color: #888; }
.vscroll i { width: 15px; height: 205px; background: #6a6a6a; }
.vscroll svg { margin-left: 3px; }
.status { grid-column: 1 / 4; background: #484848; display: flex; align-items: center; }
.zoom { width: 47px; padding-left: 6px; background: #3e3e3e; height: 17px; line-height: 16px; color: #fff; font-size: 10px; letter-spacing: -.1px; }
.docsize { margin-left: 1px; padding-left: 43px; width: 173px; background: #535353; line-height: 17px; }
.status > svg { background: #535353; height: 17px; width: 10px; padding-top: 3px; }
.hscroll { flex: 1; display: flex; align-items: center; height: 17px; margin-left: 1px; padding-left: 7px; padding-right: 26px; background: #4a4a4a; }
.hscroll i { width: 482px; height: 12px; background: #686868; margin-left: 486px; margin-right: auto; }

/* panels */
.panels { width: 341px; flex: none; border-left: 1px solid #3a3a3a; border-right: 1px solid #3a3a3a; display: flex; flex-direction: column; }
.phead { height: 12px; background: #424242; border-bottom: 1px solid #383838; display: flex; justify-content: flex-end; padding: 2px 6px 0 0; }
.ptabs { height: 28px; flex: none; background: #424242; border-bottom: 1px solid #383838; display: flex; }
.ptab { height: 28px; line-height: 27px; font-size: 10.500px; font-weight: 600; color: #a8a8a8; text-align: center; letter-spacing: -.45px; }
.ptab.active { background: #535353; color: #f4f4f4; border-right: 1px solid #383838; }
.t-char { width: 65px; border-right: 1px solid #383838; padding-right: 2px; }
.t-info { width: 39px; }
.t-layers { width: 49px; }
.burger { width: 10px; height: 7px; margin: 11px 6px 0 auto; background: repeating-linear-gradient(#aaa 0 1px, transparent 1px 2px); }
.info { height: 226px; flex: none; display: flex; flex-direction: column; border-bottom: 1px solid #383838; color: #d4d4d4; }
.irow { display: flex; border-bottom: 1px solid #414141; }
.r1 { height: 69px; padding-top: 2px; }
.r2 { height: 35px; padding-top: 1px; }
.icell { width: 168px; display: flex; }
.icell:first-child { width: 170px; border-right: 1px solid #414141; }
.drop { margin: 17px 0 0 8px; color: #d8d8d8; }
.icell + .icell .drop { margin-left: 7px; }
.r2 .drop { margin-top: 9px; }
.mini { width: 4px; height: 3px; margin: 28px 0 0 -3px; background: #ddd; clip-path: polygon(0 0, 100% 0, 50% 100%); }
.r2 .mini { margin-top: 20px; }
.mini.none { visibility: hidden; }
.icol { margin-left: 6px; padding-top: 6px; line-height: 11px; width: 26px; letter-spacing: 0; }
.r2 .icol { padding-top: 4px; }
.icol p { height: 11px; display: flex; justify-content: space-between; padding-left: 6px; }
.icol em { font-style: normal; margin-right: 3px; }
.icol .bit { padding-left: 0; letter-spacing: -.2px; }
.idoc { height: 28px; padding: 9px 0 0 11px; border-bottom: 1px solid #414141; color: #f0f0f0; }
.itip { padding: 9px 0 0 11px; color: #c4c4c4; letter-spacing: -.3px; }
.layers-tabs { margin-top: 2px; border-top: 1px solid #383838; height: 29px; }
.dim { display: flex; align-items: center; border: 1px solid #626262; border-radius: 2px; height: 18px; color: #8a8a8a; letter-spacing: -.1px; }
.dim .end { margin-left: auto; margin-right: 3px; }
.lfilter { height: 31px; display: flex; align-items: center; padding: 2px 0 0 3px; border-bottom: 1px solid #414141; }
.kind { width: 91px; padding-left: 8px; gap: 4px; margin-right: 10px; color: #999; }
.fi { margin-right: 12.400px; color: #aaa; }
.toggle { margin-left: 1px; margin-top: -1px; }
.lblend { height: 27px; display: flex; align-items: center; padding: 0 0 1px 3px; border-bottom: 1px solid #414141; }
.mode { width: 131px; padding-left: 9px; }
.dl { color: #8e8e8e; letter-spacing: -.3px; }
.op { margin-left: 7px; width: 40px; }
.num { width: 53px; padding-left: 4px; color: #707070; }
.num i { margin-left: auto; width: 17px; height: 16px; border-left: 1px solid #626262; padding: 4px; }
.llock { height: 28px; display: flex; align-items: center; padding: 0 0 2px 6px; border-bottom: 1px solid #414141; gap: 9.700px; color: #aaa; }
.lk { width: 23px; }
.fl { margin-left: 14.700px; width: 18px; margin-right: -9.700px; margin-top: -1px; }
.lwrap { height: 568px; flex: none; display: flex; overflow: hidden; border-bottom: 1px solid #3c3c3c; }
.llist { width: 324px; height: 567px; overflow: hidden; }
.layer { display: flex; border-bottom: 1px solid #414141; }
.eyecol { width: 31px; border-right: 1px solid #414141; padding: 15px 0 0 8px; }
.lbody { flex: 1; }
.lrow { height: 38px; display: flex; align-items: flex-start; color: #f0f0f0; }
.lrow.sel { background: #6a6a6a; height: 39px; margin-bottom: -1px; border-bottom: 1px solid #414141; }
.thumb { margin: 1px 0 0 17px; }
.nm { margin: 14px 0 0 7px; }
.tt { margin: 11px 0 0 28px; }
.tn { margin-left: 12px; letter-spacing: -.1px; }
.lrow .fx { margin-left: auto; margin-top: 10px; margin-right: 5px; }
.fold { width: 11px; height: 40px; background: #484848; padding: 15px 1px; color: #ccc; }
.sel .fold { background: #5d5d5d; height: 38px; }
.ef { height: 19px; display: flex; align-items: center; gap: 5px; color: #f0f0f0; }
.e1 { padding-left: 34px; }
.e2 { padding-left: 51px; }
.e3 { padding-left: 70px; }
.lscroll { width: 14px; margin-left: 1px; background: #4a4a4a; display: flex; flex-direction: column; align-items: center; padding: 5px 0; color: #999; }
.lscroll i { width: 12px; height: 296px; background: #696969; margin-top: 50px; margin-bottom: auto; }
.lfoot { flex: 1; border-bottom: 1px solid #383838; display: grid; grid-template-columns: repeat(7, 26.900px); align-items: center; justify-items: center; padding-left: 129px; color: #999; }
.lfoot .fx { color: #999; }

/* taskbar */
.taskbar { height: 40px; flex: none; background: linear-gradient(#2c6b69, #265f5e); border-top: 1px solid #234f50; display: flex; align-items: center; color: #fff; }
.start { margin-left: 11px; margin-right: 14px; }
.task { width: 158px; height: 38px; margin-right: 4px; border: 1px solid #86aeac; background: linear-gradient(#5c8987, #4b7f7c); display: flex; align-items: center; padding: 0 0 1px 9px; gap: 5px; font-size: 12px; letter-spacing: -.3px; }
.task.active { background: linear-gradient(#7fa3a1, #8fb0ae); border-color: #e0ecec; }
.tray { margin-left: auto; display: flex; gap: 7.900px; }
.lang { font-size: 12px; margin-left: 15px; width: 24px; letter-spacing: -.2px; }
.clock { display: flex; flex-direction: column; font-size: 11.500px; line-height: 17px; margin: 0 17px 0 16px; letter-spacing: -.3px; width: 56px; align-items: center; }

/* layer style dialog */
.dialog { position: absolute; left: 754px; top: 314px; width: 800px; height: 485px; padding: 0 7px 8px 7px; border: 1px solid #3f8f8e; display: flex; flex-direction: column; background: linear-gradient(90deg, #67ccbc 190px, transparent 250px) 0 100% / 300px 30px no-repeat, linear-gradient(90deg, #76d6d3 300px, #45a2a1 312px); box-shadow: 0 1px 4px rgba(0,0,0,.25); }
.dtitle { height: 30px; flex: none; display: flex; align-items: flex-start; padding-left: 356px; color: #1d4343; font-size: 14.700px; line-height: 29px; letter-spacing: -.2px; }
.close { margin-left: auto; width: 31px; height: 20px; background: #c75050; display: flex; align-items: center; justify-content: center; }
.dbody { flex: 1; background: #535353; display: flex; outline: 1px solid #3f8484; }
.dlist { width: 230px; height: 426px; margin: 9px 0 0 10px; border: 1px solid #414141; padding: 1px; display: flex; flex-direction: column; }
.drows { height: 397px; border-right: 17px solid #4a4a4a; border-bottom: 1px solid #484848; }
.drow { height: 26px; border-top: 1px solid #414141; display: flex; align-items: center; padding-left: 5px; gap: 5px; color: #f0f0f0; }
.drow .cb { margin-top: -2px; }
.drow > span:first-child { margin-left: 1px; }
.drow.sub { padding-left: 15px; }
.drow.sel { background: #6a6a6a; }
.drow:last-child { height: 27px; border-bottom: 1px solid #4a4a4a; }
.add { width: 14px; height: 14px; margin-left: auto; margin-right: 3px; border: 1px solid #ddd; background: linear-gradient(#ddd, #ddd) center / 2px 8px no-repeat, linear-gradient(#ddd, #ddd) center / 8px 2px no-repeat; }
.dlfoot { display: flex; align-items: center; flex: 1; padding-left: 8px; color: #ddd; }
.dn { margin: 20px 0 0 2px; }
.a1 { margin-left: 14px; }
.a2 { margin-left: 15px; }
.tr { margin-left: auto; margin-right: 10px; }
fieldset { margin: 0; padding: 0; border: 1px solid #414141; min-width: 0; }
legend { padding: 0 4px 0 7px; line-height: 12px; color: #f0f0f0; }
.outer { margin: 10px 0 0 16px; width: 372px; height: 424px; }
.outer > legend { margin-left: 15px; }
.inner { margin: 2px 0 0 9px; width: 353px; height: 72px; }
.inner > legend { margin-left: 14px; }
.crow { display: flex; align-items: center; height: 26px; margin-top: 5px; }
.cl { width: 75px; text-align: right; color: #ccc; letter-spacing: -.3px; }
.select { width: 119px; height: 19px; margin-left: 6px; border: 1px solid #666; border-radius: 2px; background: #454545; display: flex; align-items: center; justify-content: space-between; padding: 0 3px 0 7px; color: #f0f0f0; }
.swatch { width: 36px; height: 25px; margin-left: 3px; background: #231f20; border: 1px solid #3c3c3c; }
.c2 { margin-top: -1px; }
.slider { width: 100px; height: 12px; margin-left: 11px; background: linear-gradient(#777, #777) 0 0 / 95px 3px no-repeat; padding: 1px 0 0 89px; }
.input { width: 43px; height: 19px; margin-left: 4px; border: 2px solid #2a5db0; background: #454545; padding: 1px 0 0 2px; }
mark { background: #3390ff; color: #fff; line-height: 13px; display: inline-block; }
.pct { margin-left: 3px; color: #ccc; }
.defaults { display: flex; margin: 6px 0 0 88px; gap: 8px; }
.d1 { width: 86px; }
.d2 { width: 99px; }
.dside { margin: 12px 0 0 16px; width: 130px; display: flex; flex-direction: column; }
.pbtn { height: 27px; margin-bottom: 8px; border: 1px solid #7a7a7a; border-radius: 14px; display: flex; align-items: center; justify-content: center; font-size: 12px; color: #e6e6e6; letter-spacing: 0; }
.pbtn.ok { border: 1.500px solid #e8e8e8; }
.prev { display: flex; align-items: center; gap: 7px; padding-left: 28px; font-size: 12px; letter-spacing: -.1px; height: 18px; }
.cb.big { width: 13px; height: 13px; }
.pbox { margin-top: 9px; height: 130px; background: #282828; border: 1px solid #484848; display: flex; align-items: center; justify-content: center; }
.pbox i { width: 64px; height: 64px; background: #231f20; }
```
